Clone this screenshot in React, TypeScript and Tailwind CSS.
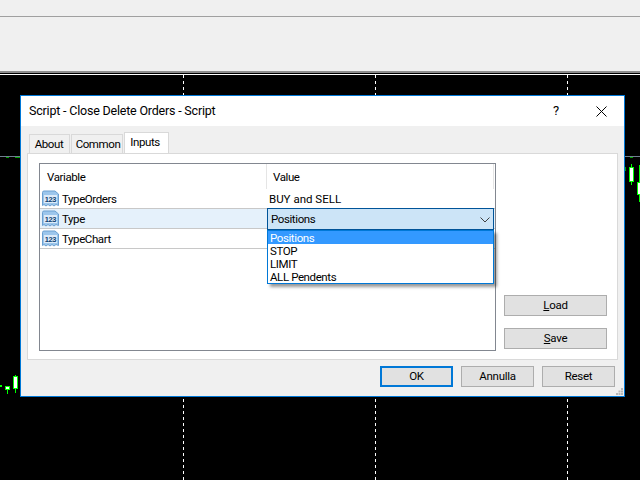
const font = { fontFamily: 'Roboto, "Noto Sans", sans-serif' };

const ROWS = ['TypeOrders', 'Type', 'TypeChart'];
const OPTIONS = ['Positions', 'STOP', 'LIMIT', 'ALL Pendents'];

function NumIcon() {
  return (
    <svg width="17" height="17" viewBox="0 0 17 17" className="shrink-0">
      <path d="M0.5 2.5 Q0.5 1 2 1 H13 L16.5 4 V15.5 L14 14.5 L12 16 L10 14.5 L8 16 L6 14.5 L4 16 L2 14.5 L0.5 15.5 Z" fill="#9cc6ec" stroke="#6a9fd0" />
      <rect x="2" y="5" width="13" height="8" fill="#dcebf9" />
      <text x="8.5" y="12" textAnchor="middle" fontSize="7.5" fontWeight="700" fill="#103f70" fontFamily="Liberation Sans, sans-serif">123</text>
    </svg>
  );
}

function Candle({ x, top, h, body, bodyH }: { x: number; top: number; h: number; body: number; bodyH: number }) {
  return (
    <div className="absolute" style={{ left: x, top, height: h, width: 5 }}>
      <div className="absolute left-[2px] top-0 bottom-0 w-px bg-[#00ff00]" />
      <div className="absolute left-0 w-[5px] border border-[#00ff00] bg-white" style={{ top: body, height: bodyH }} />
    </div>
  );
}

function Btn({ children, className = '' }: { children: React.ReactNode; className?: string }) {
  return (
    <div className={`flex items-center justify-center pt-px bg-[#e1e1e1] border border-[#adadad] text-[11.5px] tracking-[-0.3px] text-black ${className}`}>
      {children}
    </div>
  );
}

export default function App() {
  return (
    <div className="relative w-[640px] h-[480px] overflow-hidden bg-black" style={font}>
      {/* toolbars */}
      <div className="h-4 bg-[#f0f0f0]" />
      <div className="h-[55px] bg-[#f0f0f0] border-t border-[#a0a0a0]" />
      <div className="h-[2px] bg-[#8c8c8c]" />
      <div className="h-px mt-px bg-white" />

      {/* chart grid */}
      {[183, 375, 567].map((x) => (
        <div key={x} className="absolute top-[75px] bottom-0 w-px" style={{ backgroundImage: 'repeating-linear-gradient(to bottom, #fff 0 3px, #000 3px 6px)', left: x }} />
      ))}
      <div className="absolute left-0 top-[156px] h-px w-5 bg-[#708090]" />
      <div className="absolute left-[625px] top-[156px] h-px w-[15px] bg-[#708090]" />
      <div className="absolute left-[6px] top-[157px] h-px w-[3px] bg-[#00a000]" />
      <div className="absolute left-[15px] top-[157px] h-px w-[5px] bg-[#00a000]" />
      <div className="absolute left-[630px] top-[157px] h-px w-[3px] bg-[#00a000]" />
      <div className="absolute left-[625px] top-[167px] h-[4px] w-px bg-[#00a000]" />
      <div className="absolute left-0 top-[385px] h-[2px] w-[2px] bg-[#00ff00]" />
      <Candle x={5} top={386} h={8} body={0} bodyH={4} />
      <Candle x={13} top={375} h={18} body={1} bodyH={13} />
      <Candle x={629} top={164} h={21} body={3} bodyH={15} />
      <Candle x={637} top={165} h={37} body={17} bodyH={13} />

      {/* dialog */}
      <div className="absolute left-5 top-[95px] w-[605px] h-[302px] flex flex-col bg-[#f0f0f0] border border-[#0078d7]">
        <div className="h-[30px] shrink-0 bg-white flex items-center pl-2 text-[12.5px] tracking-[-0.2px] text-black">
          <span>Script - Close Delete Orders - Script</span>
          <span className="ml-auto mr-[37px] text-[13px]">?</span>
          <svg width="11" height="11" viewBox="0 0 11 11" className="mr-[17px]">
            <path d="M0.5 0.5 L10.5 10.5 M10.5 0.5 L0.5 10.5" stroke="#000" fill="none" />
          </svg>
        </div>

        {/* tabs */}
        <div className="flex h-[27px] shrink-0 items-end pl-2 text-[11.5px] tracking-[-0.4px] text-black">
          <div className="w-[41px] h-[19px] mr-px pt-px pr-px flex items-center justify-center bg-[#f0f0f0] border border-b-0 border-[#d9d9d9]">About</div>
          <div className="w-[52px] h-[19px] mr-px pt-px pl-[2px] flex items-center justify-center bg-[#f0f0f0] border border-b-0 border-[#d9d9d9]">Common</div>
          <div className="w-[45px] h-[21px] pr-[3px] flex items-center justify-center bg-white border border-b-0 border-[#d9d9d9]">Inputs</div>
        </div>

        {/* tab panel */}
        <div className="ml-[6px] mr-[6px] h-[207px] shrink-0 flex bg-white border border-[#d9d9d9] pl-[11px] pt-[9px]">
          <div className="relative w-[457px] h-[188px] border border-[#828790] text-[11.5px] tracking-[-0.4px] text-black">
            <div className="flex h-[25px] items-center">
              <div className="w-[226px] pl-[7px] pt-[2px]">Variable</div>
              <div className="h-full w-px bg-[#e5e5e5]" />
              <div className="pl-[6px] pt-[2px]">Value</div>
              <div className="ml-auto mr-px h-full w-px bg-[#e5e5e5]" />
            </div>
            {ROWS.map((row, i) => (
              <div key={row} className={`flex h-5 items-center border-b border-[#c8c8c8] ${i === 1 ? 'bg-[#e5f1fb]' : ''}`}>
                <div className="w-[226px] flex items-center gap-[3px] pl-[2px]">
                  <NumIcon />
                  <span className="pt-[2px]">{row}</span>
                </div>
                {i === 0 && <div className="pl-[3px] pt-[2px] tracking-normal">BUY and SELL</div>}
              </div>
            ))}

            {/* open combo */}
            <div className="absolute left-[227px] top-[44px] w-[227px] h-[22px] pt-[2px] flex items-center bg-[#cce4f7] border border-[#005499] pl-[3px]">
              <span className="flex-1">Positions</span>
              <svg width="10" height="6" viewBox="0 0 10 6" className="mr-[3px]">
                <path d="M0.5 0.5 L5 5 L9.5 0.5" stroke="#404040" fill="none" />
              </svg>
            </div>
            <div className="absolute z-10 left-[227px] top-[66px] w-[227px] h-[54px] flex flex-col bg-white border border-[#0078d7] shadow-[3px_3px_3px_rgba(0,0,0,0.4)] leading-[13px]">
              {OPTIONS.map((o, i) => (
                <div key={o} className={`h-[13px] pt-px pl-[2px] ${i === 0 ? 'bg-[#3399ff] text-white' : ''}`}>{o}</div>
              ))}
            </div>
          </div>

          <div className="ml-2 w-[103px] h-[188px] flex flex-col justify-end gap-3 pb-[2px]">
            <Btn className="h-[21px]"><span><span className="underline">L</span>oad</span></Btn>
            <Btn className="h-[21px]"><span><span className="underline">S</span>ave</span></Btn>
          </div>
        </div>

        {/* footer */}
        <div className="relative flex-1 flex justify-end gap-2 pr-[9px] pt-[6px]">
          <Btn className="w-[73px] h-[21px] !border-2 !border-[#0078d7]">OK</Btn>
          <Btn className="w-[73px] h-[21px]">Annulla</Btn>
          <Btn className="w-[73px] h-[21px]">Reset</Btn>
          <svg width="8" height="8" viewBox="0 0 8 8" className="absolute right-0 bottom-0" fill="#b8b8b8">
            <rect x="5" y="0" width="2" height="2" />
            <rect x="2.5" y="2.5" width="2" height="2" />
            <rect x="5" y="2.5" width="2" height="2" />
            <rect x="0" y="5" width="2" height="2" />
            <rect x="2.5" y="5" width="2" height="2" />
            <rect x="5" y="5" width="2" height="2" />
          </svg>
        </div>
      </div>
    </div>
  );
}
